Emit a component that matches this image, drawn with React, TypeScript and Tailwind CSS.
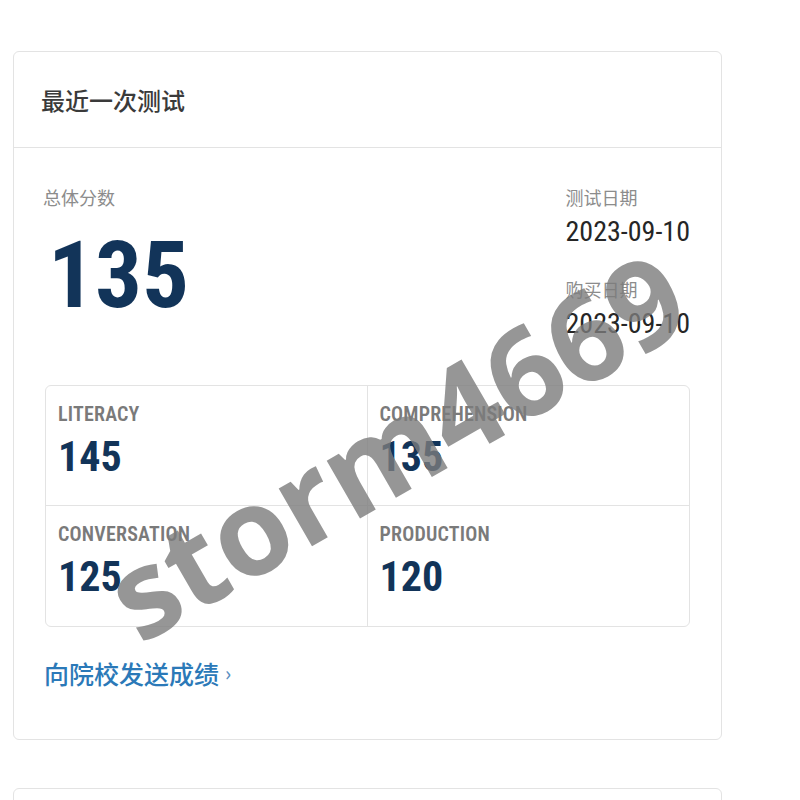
const CJK = "font-['Noto_Sans_CJK_SC','Noto_Sans',sans-serif]";
const NUM = "font-['Liberation_Sans_Narrow','Roboto_Condensed','Liberation_Sans',sans-serif]";

const sections = [
  { label: "LITERACY", score: 145 },
  { label: "COMPREHENSION", score: 135 },
  { label: "CONVERSATION", score: 125 },
  { label: "PRODUCTION", score: 120 },
];

function DateBlock({ label, value, first }: { label: string; value: string; first?: boolean }) {
  return (
    <div className={first ? "" : "mt-[29px]"}>
      <p className={`${CJK} text-[18px] leading-[24px] text-[#8c8c8c]`}>{label}</p>
      <p className={`${NUM} mt-[7px] text-[28px] leading-[32px] text-[#262626]`}>{value}</p>
    </div>
  );
}

export default function App() {
  return (
    <div className="relative min-h-screen overflow-hidden bg-white px-[13px] pt-[51px]">
      <div className="w-[709px] rounded-md border border-[#e3e3e3] bg-white">
        <div className="flex h-[96px] items-center border-b border-[#e3e3e3] px-[27px]">
          <h2 className={`${CJK} text-[24px] font-medium text-[#3a3a3a]`}>最近一次测试</h2>
        </div>

        <div className="px-[31px] pt-[37px] pb-[50px]">
          <div className="flex items-start justify-between">
            <div>
              <p className={`${CJK} -ml-[2px] text-[18px] leading-[24px] text-[#8c8c8c]`}>总体分数</p>
              <p className={`${NUM} mt-[19px] pl-[3px] text-[93px] font-bold leading-[96px] text-[#123459]`}>135</p>
            </div>
            <div>
              <DateBlock label="测试日期" value="2023-09-10" first />
              <DateBlock label="购买日期" value="2023-09-10" />
            </div>
          </div>

          <div className="mt-[45px] grid grid-cols-2 rounded-md border border-[#e3e3e3]">
            {sections.map((s, i) => (
              <div
                key={s.label}
                className={`h-[120px] px-[12px] pt-[16px] ${i % 2 === 0 ? "border-r border-[#e3e3e3]" : ""} ${i < 2 ? "border-b border-[#e3e3e3]" : ""}`}
              >
                <p className={`${NUM} text-[20px] font-semibold leading-[24px] tracking-[0.2px] text-[#7a7a7a]`}>{s.label}</p>
                <p className={`${NUM} mt-[9px] text-[42px] font-bold leading-[44px] text-[#123459]`}>{s.score}</p>
              </div>
            ))}
          </div>

          <a href="#" className={`${CJK} -ml-[1px] mt-[30px] flex items-center gap-[6px] text-[25px] leading-[32px] font-medium text-[#2b79b8]`}>
            向院校发送成绩
            <span className="text-[20px] leading-none text-[#5a8fbf]">›</span>
          </a>
        </div>
      </div>

      <div className="mt-[48px] h-[60px] w-[709px] rounded-md border border-[#e3e3e3] bg-white" />

      <div className="pointer-events-none absolute left-[395px] top-[444px] -translate-x-1/2 -translate-y-1/2 -rotate-[30deg] whitespace-nowrap font-['Open_Sans',sans-serif] text-[122px] font-bold leading-none text-[#7c7c7c]/80">
        storm4669
      </div>
    </div>
  );
}
